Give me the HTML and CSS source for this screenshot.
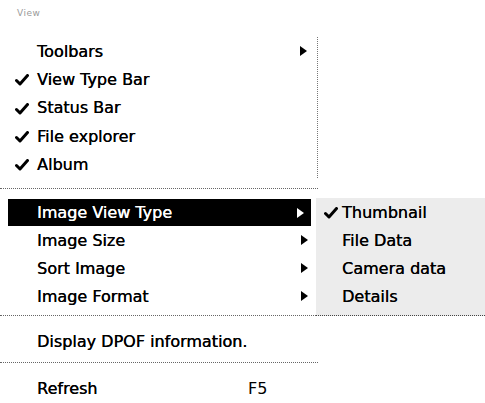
FILE: index.html
```html
<!DOCTYPE html>
<html lang="en">
<head>
    <meta charset="UTF-8">
    <title>View menu</title>
    <link rel="stylesheet" href="styles.css">
</head>
<body>
    <div class="screen">
        <div class="caption">View</div>

        <div class="menu">
            <div class="group group-top">
                <div class="item"><span class="check"></span><span class="label">Toolbars</span><span class="arrow"></span></div>
                <div class="item"><span class="check"><svg viewBox="0 0 14 12"><path d="M1.5 6.5 L5 10 L12.5 1.5"/></svg></span><span class="label">View Type Bar</span></div>
                <div class="item"><span class="check"><svg viewBox="0 0 14 12"><path d="M1.5 6.5 L5 10 L12.5 1.5"/></svg></span><span class="label">Status Bar</span></div>
                <div class="item"><span class="check"><svg viewBox="0 0 14 12"><path d="M1.5 6.5 L5 10 L12.5 1.5"/></svg></span><span class="label">File explorer</span></div>
                <div class="item"><span class="check"><svg viewBox="0 0 14 12"><path d="M1.5 6.5 L5 10 L12.5 1.5"/></svg></span><span class="label">Album</span></div>
            </div>
            <div class="sep sep-first"></div>

            <div class="item item-active"><span class="check"></span><span class="label">Image View Type</span><span class="arrow"></span></div>
            <div class="item"><span class="check"></span><span class="label">Image Size</span><span class="arrow"></span></div>
            <div class="item"><span class="check"></span><span class="label">Sort Image</span><span class="arrow"></span></div>
            <div class="item"><span class="check"></span><span class="label">Image Format</span><span class="arrow"></span></div>
            <div class="sep sep-second"></div>

            <div class="item"><span class="check"></span><span class="label">Display DPOF information.</span></div>
            <div class="sep sep-third"></div>

            <div class="item"><span class="check"></span><span class="label">Refresh</span><span class="key">F5</span></div>
        </div>

        <div class="submenu">
            <div class="sub-item"><span class="check"><svg viewBox="0 0 14 12"><path d="M1.5 6.5 L5 10 L12.5 1.5"/></svg></span><span class="label">Thumbnail</span></div>
            <div class="sub-item"><span class="check"></span><span class="label">File Data</span></div>
            <div class="sub-item"><span class="check"></span><span class="label">Camera data</span></div>
            <div class="sub-item"><span class="check"></span><span class="label">Details</span></div>
        </div>
    </div>
</body>
</html>
```

FILE: styles.css
```css
* {
    margin: 0;
    padding: 0;
    box-sizing: border-box;
}

body {
    font-family: 'DejaVu Sans', Verdana, sans-serif;
    background: #ffffff;
    color: #000;
    width: 485px;
    height: 403px;
    overflow: hidden;
}

.screen {
    position: relative;
    width: 485px;
    height: 403px;
}

.caption {
    height: 37px;
    padding: 8px 0 0 17px;
    font-size: 9px;
    color: #9a9a9a;
    letter-spacing: 0.5px;
}

.menu {
    width: 318px;
}

.group-top {
    border-right: 1px dotted #777;
}

.item {
    display: flex;
    align-items: center;
    height: 28px;
    font-size: 16px;
    padding-right: 10px;
}

.group-top .item {
    height: 28.3px;
}

.check {
    width: 37px;
    flex: none;
    display: flex;
    align-items: center;
    padding-left: 15px;
    padding-top: 2px;
}

.check svg {
    width: 14px;
    height: 12px;
    fill: none;
    stroke: #000;
    stroke-width: 3;
    stroke-linecap: round;
    stroke-linejoin: round;
}

.label {
    flex: 1;
    white-space: nowrap;
    text-shadow: 0.3px 0 0 currentColor;
}

.arrow {
    width: 0;
    height: 0;
    border-top: 5px solid transparent;
    border-bottom: 5px solid transparent;
    border-left: 7px solid #000;
}

.key {
    width: 60px;
    font-size: 16px;
}

.item-active {
    margin-left: 8px;
    width: 303px;
    height: 27px;
    background: #000;
    color: #fff;
    padding-right: 7px;
}

.item-active .check {
    width: 29px;
}

.item-active .arrow {
    border-left-color: #fff;
}

.sep {
    border-top: 1px dotted #666;
    width: 318px;
}

.sep-first {
    margin-top: 10px;
    margin-bottom: 10px;
}

.sep-second {
    margin-top: 5px;
    margin-bottom: 11px;
}

.sep-third {
    margin-top: 7px;
    margin-bottom: 11px;
}

.submenu {
    position: absolute;
    left: 316px;
    top: 198px;
    width: 169px;
    height: 118px;
    background: #ececec;
    border-bottom: 1px dotted #444;
}

.sub-item {
    display: flex;
    align-items: center;
    height: 28px;
    font-size: 16px;
}

.sub-item .check {
    width: 26px;
    padding-left: 8px;
}
```
